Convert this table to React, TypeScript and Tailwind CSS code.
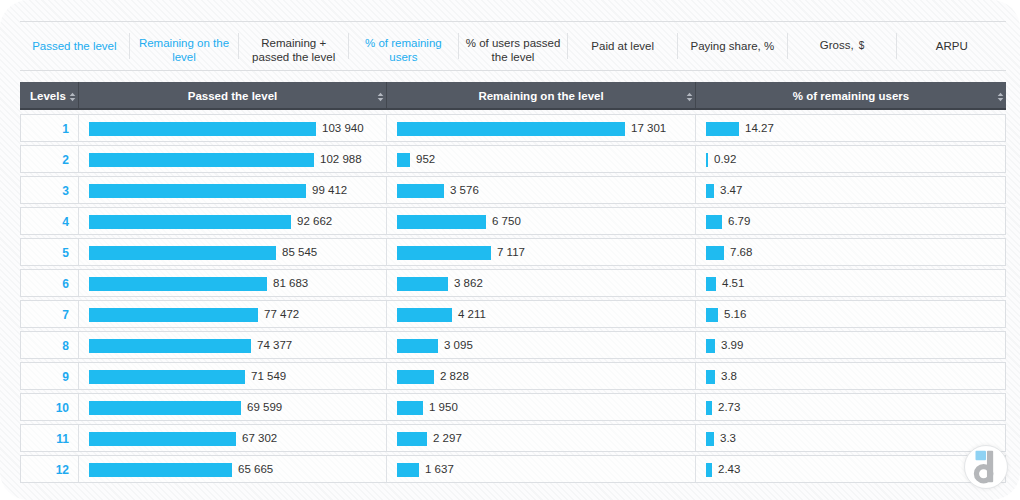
const tabs = [
  { label: 'Passed the level', active: true, two: false },
  { label: 'Remaining on the level', active: true, two: true },
  { label: 'Remaining + passed the level', active: false, two: true },
  { label: '% of remaining users', active: true, two: true },
  { label: '% of users passed the level', active: false, two: true },
  { label: 'Paid at level', active: false, two: false },
  { label: 'Paying share, %', active: false, two: false },
  { label: 'Gross,', active: false, two: false, dollar: true },
  { label: 'ARPU', active: false, two: false },
]

const rows = [
  [103940, 17301, 14.27],
  [102988, 952, 0.92],
  [99412, 3576, 3.47],
  [92662, 6750, 6.79],
  [85545, 7117, 7.68],
  [81683, 3862, 4.51],
  [77472, 4211, 5.16],
  [74377, 3095, 3.99],
  [71549, 2828, 3.8],
  [69599, 1950, 2.73],
  [67302, 2297, 3.3],
  [65665, 1637, 2.43],
]

const fmt = (n: number) => String(n).replace(/\B(?=(\d{3})+(?!\d))/g, ' ')

function SortIcon() {
  return (
    <svg width="7" height="10" viewBox="0 0 7 10" className="shrink-0">
      <path d="M3.5 0.8 L6.3 4 L0.7 4 Z" fill="#b3b8c0" />
      <path d="M3.5 9.2 L6.3 6 L0.7 6 Z" fill="#b3b8c0" />
    </svg>
  )
}

function Bar({ width, label }: { width: number; label: string }) {
  return (
    <div className="flex items-center h-full pl-[10px] pt-[1px]">
      <div className="h-[14px] bg-[#1fbbf0]" style={{ width }} />
      <span className="ml-[6px] text-[#333] text-[11.5px]">{label}</span>
    </div>
  )
}

function Logo() {
  return (
    <div className="absolute right-[12px] bottom-[11px] w-[44px] h-[44px] rounded-full bg-white border border-[#e4e6e8] shadow-[0_0_4px_rgba(0,0,0,0.08)] flex items-center justify-center">
      <svg width="44" height="44" viewBox="0 0 44 44">
        <rect x="11" y="5" width="11" height="10" rx="1" fill="#8fd2f3" />
        <rect x="23" y="5" width="6.5" height="33" rx="1" fill="#b5b7ba" />
        <circle cx="19.5" cy="29" r="7.5" fill="none" stroke="#b5b7ba" strokeWidth="5.5" />
      </svg>
    </div>
  )
}

export default function App() {
  const maxP = 103940
  const maxR = 17301

  return (
    <div className="w-[1020px] h-[500px] bg-white overflow-hidden font-['Liberation_Sans',Arial,sans-serif]">
      <div className="relative h-full rounded-[28px] bg-[repeating-linear-gradient(45deg,#f5f6f7_0px,#f5f6f7_1.5px,#fcfcfd_1.5px,#fcfcfd_4.5px)] pt-[21px] pl-[20px] pr-[14px]">
        {/* tabs */}
        <div className="h-[50px] border-y border-[#dcdee1] flex items-center">
          {tabs.map((t, i) => (
            <div
              key={t.label}
              className={
                'flex-1 h-[26px] flex items-center justify-center text-center text-[11.5px] leading-[14px] ' +
                (i < tabs.length - 1 ? 'border-r border-[#e1e3e6] ' : '') +
                (t.active ? 'text-[#22adf0]' : 'text-[#333]')
              }
            >
              <span className={t.two ? 'mt-[7px] px-[4px]' : 'mb-[1px]'}>
                {t.label}
                {t.dollar && <span className="ml-[5px] text-[10px]">$</span>}
              </span>
            </div>
          ))}
        </div>

        {/* table */}
        <div className="mt-[11px]">
          <div className="grid grid-cols-[59px_308px_309px_310px] h-[28px] bg-[#545a64] border-b-2 border-[#3e434b] text-white font-bold text-[11.5px]">
            <div className="flex items-center justify-between pl-[10px] pr-[2px] pt-[3px] border-r border-[#42474f]">
              <span>Levels</span>
              <SortIcon />
            </div>
            {['Passed the level', 'Remaining on the level', '% of remaining users'].map((h, i) => (
              <div
                key={h}
                className={'relative flex items-center justify-center pt-[3px] ' + (i < 2 ? 'border-r border-[#42474f]' : '')}
              >
                <span>{h}</span>
                <div className="absolute right-[2px] top-[10px]">
                  <SortIcon />
                </div>
              </div>
            ))}
          </div>

          <div className="mt-[4px] flex flex-col gap-[3px]">
            {rows.map((r, i) => (
              <div
                key={i}
                className="grid grid-cols-[58px_308px_309px_309px] h-[28px] border border-[#dcdfe3] bg-white/50"
              >
                <div className="flex items-center justify-end pr-[9px] pt-[1px] border-r border-[#dfe2e6] text-[#1eaaf0] font-bold text-[12px]">
                  {i + 1}
                </div>
                <div className="border-r border-[#dfe2e6]">
                  <Bar width={Math.round((r[0] / maxP) * 227)} label={fmt(r[0])} />
                </div>
                <div className="border-r border-[#dfe2e6]">
                  <Bar width={Math.max(2, Math.round((r[1] / maxR) * 228))} label={fmt(r[1])} />
                </div>
                <div>
                  <Bar width={Math.max(2, Math.round(r[2] * 2.3))} label={String(r[2])} />
                </div>
              </div>
            ))}
          </div>
        </div>

        <Logo />
      </div>
    </div>
  )
}
